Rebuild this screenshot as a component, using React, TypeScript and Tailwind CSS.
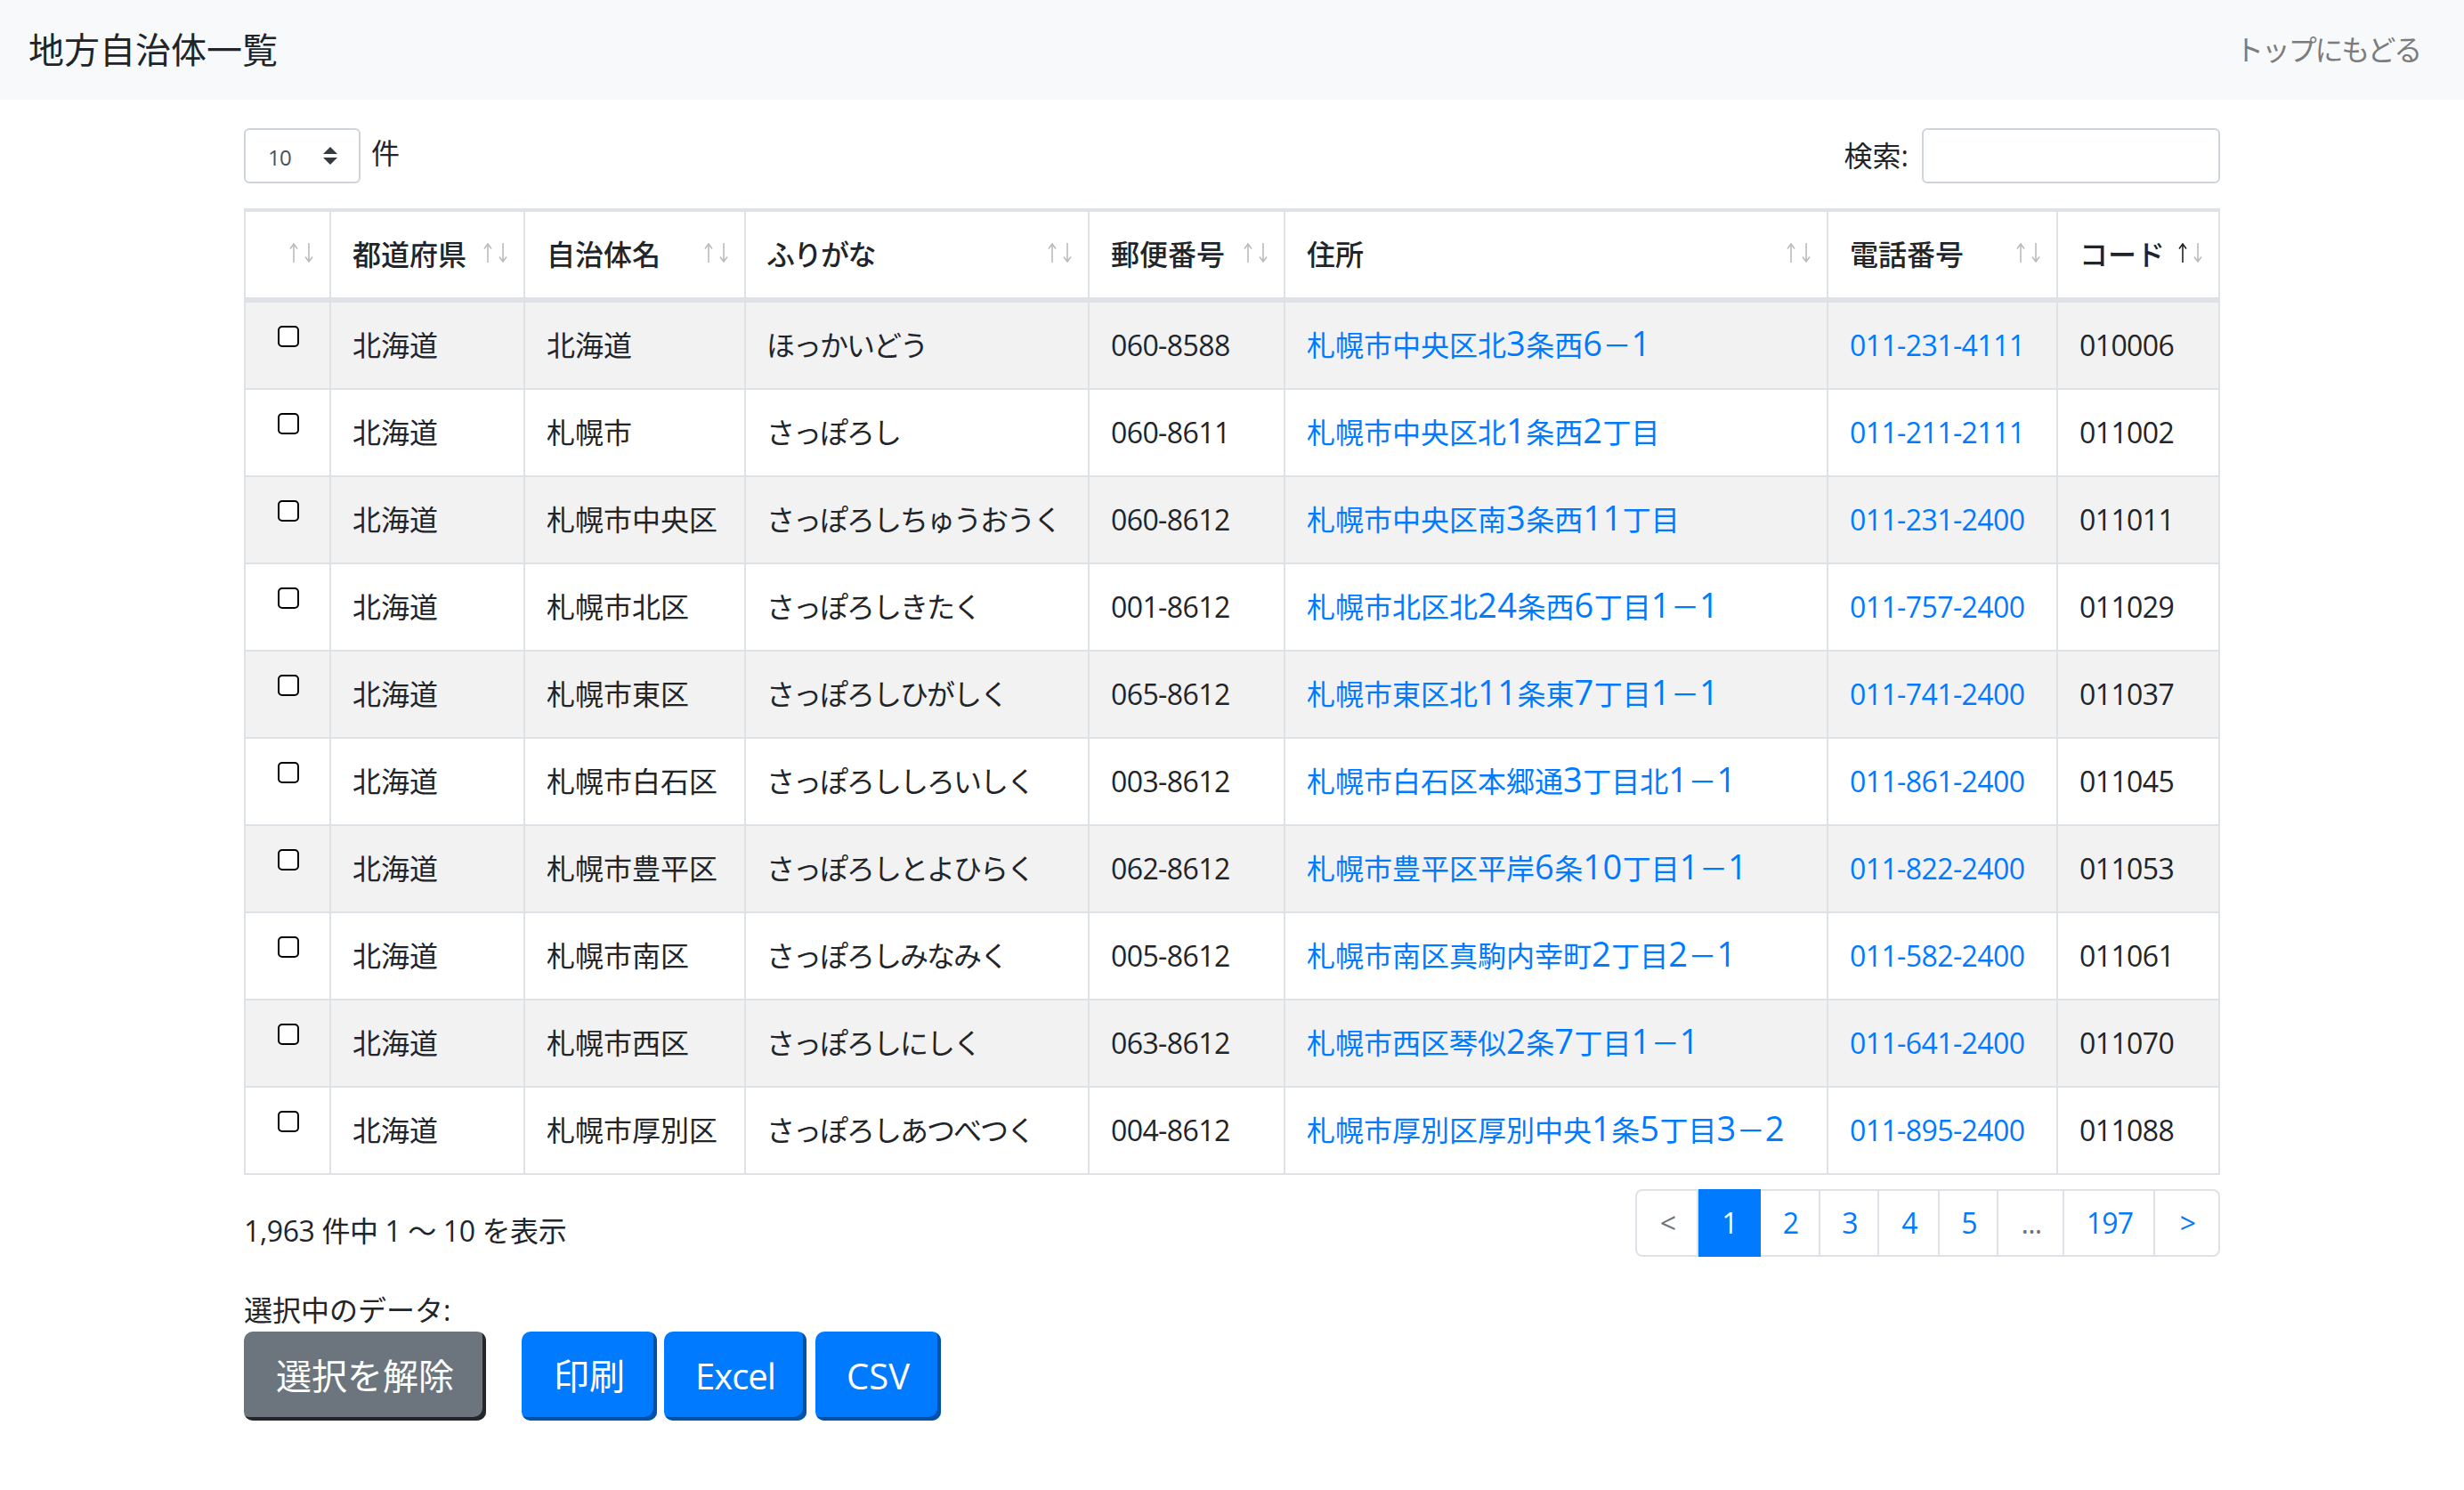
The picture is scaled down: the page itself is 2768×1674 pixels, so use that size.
import { ChangeEvent, useState } from "react"

type Row = {
  city: string
  kana: string
  zip: string
  address: string
  tel: string
  code: string
}

const rows: Row[] = [
  { city: "北海道", kana: "ほっかいどう", zip: "060-8588", address: "札幌市中央区北3条西6－1", tel: "011-231-4111", code: "010006" },
  { city: "札幌市", kana: "さっぽろし", zip: "060-8611", address: "札幌市中央区北1条西2丁目", tel: "011-211-2111", code: "011002" },
  { city: "札幌市中央区", kana: "さっぽろしちゅうおうく", zip: "060-8612", address: "札幌市中央区南3条西11丁目", tel: "011-231-2400", code: "011011" },
  { city: "札幌市北区", kana: "さっぽろしきたく", zip: "001-8612", address: "札幌市北区北24条西6丁目1－1", tel: "011-757-2400", code: "011029" },
  { city: "札幌市東区", kana: "さっぽろしひがしく", zip: "065-8612", address: "札幌市東区北11条東7丁目1－1", tel: "011-741-2400", code: "011037" },
  { city: "札幌市白石区", kana: "さっぽろししろいしく", zip: "003-8612", address: "札幌市白石区本郷通3丁目北1－1", tel: "011-861-2400", code: "011045" },
  { city: "札幌市豊平区", kana: "さっぽろしとよひらく", zip: "062-8612", address: "札幌市豊平区平岸6条10丁目1－1", tel: "011-822-2400", code: "011053" },
  { city: "札幌市南区", kana: "さっぽろしみなみく", zip: "005-8612", address: "札幌市南区真駒内幸町2丁目2－1", tel: "011-582-2400", code: "011061" },
  { city: "札幌市西区", kana: "さっぽろしにしく", zip: "063-8612", address: "札幌市西区琴似2条7丁目1－1", tel: "011-641-2400", code: "011070" },
  { city: "札幌市厚別区", kana: "さっぽろしあつべつく", zip: "004-8612", address: "札幌市厚別区厚別中央1条5丁目3－2", tel: "011-895-2400", code: "011088" },
]

const headers = ["", "都道府県", "自治体名", "ふりがな", "郵便番号", "住所", "電話番号", "コード"]

const colWidths = ["w-[96px]", "w-[218px]", "w-[248px]", "w-[386px]", "w-[220px]", "w-[610px]", "w-[258px]", "w-[180px]"]

const pages = [
  { label: "<", className: "w-[71px] text-[#6c757d] rounded-l-lg border-l-2" },
  { label: "1", className: "w-[70px] bg-[#007bff] text-white border-y-[#007bff] border-r-[#007bff]" },
  { label: "2", className: "w-[67px] text-[#007bff]" },
  { label: "3", className: "w-[66px] text-[#007bff]" },
  { label: "4", className: "w-[68px] text-[#007bff]" },
  { label: "5", className: "w-[66px] text-[#007bff]" },
  { label: "...", className: "w-[74px] text-[#6c757d]" },
  { label: "197", className: "w-[102px] text-[#007bff]" },
  { label: ">", className: "w-[73px] text-[#007bff] rounded-r-lg" },
]

function SortArrows({ active }: { active?: boolean }) {
  return (
    <span className="flex gap-[7px] -mt-[5px] shrink-0">
      <svg width="10" height="22" viewBox="0 0 10 22" fill="none" stroke="currentColor" strokeWidth="1.6" className={active ? "text-[#212529]" : "text-[#212529] opacity-30"}>
        <path d="M5 22V1M1 6.5 5 1l4 5.5" />
      </svg>
      <svg width="10" height="22" viewBox="0 0 10 22" fill="none" stroke="currentColor" strokeWidth="1.6" className="text-[#212529] opacity-30">
        <path d="M5 0v21M1 15.5 5 21l4-5.5" />
      </svg>
    </span>
  )
}

// 住所の数字だけ少し大きい字で出す
function Address({ text }: { text: string }) {
  return (
    <a href="#" className="text-[#007bff]">
      {text.split(/(\d+)/).map((part, i) =>
        /\d/.test(part) ? (
          <span key={i} className="text-[38px] leading-[0] tracking-[0.5px]">
            {part}
          </span>
        ) : (
          part
        )
      )}
    </a>
  )
}

function Cell({ children, last, className }: { children: React.ReactNode; last?: boolean; className?: string }) {
  return (
    <td className={`border-t-2 border-[#dee2e6] p-6 align-top ${last ? "" : "border-r-2"} ${className ?? ""}`}>
      {children}
    </td>
  )
}

export default function App() {
  const [search, setSearch] = useState("")

  return (
    <div className="min-h-screen bg-white font-['Open_Sans','Noto_Sans_CJK_JP',sans-serif] text-[32px] leading-[48px] text-[#212529]">
      <nav className="flex h-[112px] items-center justify-between bg-[#f8f9fa] pl-8 pr-[49px]">
        <span className="text-[40px] leading-[60px]">地方自治体一覧</span>
        <a href="#" className="tracking-[-2.2px] text-[#7c7c7d]">トップにもどる</a>
      </nav>

      <div className="mx-auto w-[2220px]">
        <div className="mt-8 flex items-start justify-between">
          <div className="flex items-start gap-3">
            <div className="flex h-[62px] w-[131px] items-center justify-between rounded-md border-2 border-[#ced4da] pl-[25px] pr-6 text-[24px] text-[#495057]">
              <span className="pt-1 tracking-[-0.8px]">10</span>
              <svg width="16" height="20" viewBox="0 0 16 20" fill="#343a40">
                <path d="M8 0l8 8H0zM8 20L0 12h16z" />
              </svg>
            </div>
            <span className="mt-1">件</span>
          </div>
          <label className="flex items-center gap-[15px]">
            <span>検索:</span>
            <input
              type="text"
              value={search}
              onChange={(e: ChangeEvent<HTMLInputElement>) => setSearch(e.target.value)}
              className="h-[62px] w-[335px] rounded-md border-2 border-[#ced4da] px-4 text-[28px] outline-none"
            />
          </label>
        </div>

        <table className="mt-7 w-[2220px] table-fixed border-separate border-spacing-0 border-2 border-[#dee2e6]">
          <colgroup>
            {colWidths.map((w) => (
              <col key={w} className={w} />
            ))}
          </colgroup>
          <thead>
            <tr>
              {headers.map((h, i) => (
                <th
                  key={i}
                  className={`border-t-2 border-b-4 border-[#dee2e6] py-6 pl-6 pr-[18px] text-left font-medium ${i < headers.length - 1 ? "border-r-2" : ""}`}
                >
                  <div className="flex items-center justify-between">
                    <span className={h === "ふりがな" ? "-ml-px tracking-[-1.5px]" : ""}>{h}</span>
                    <SortArrows active={i === headers.length - 1} />
                  </div>
                </th>
              ))}
            </tr>
          </thead>
          <tbody>
            {rows.map((row, i) => (
              <tr key={row.code} className={i % 2 === 0 ? "bg-[#f2f2f2]" : ""}>
                <Cell className="!px-0">
                  <input type="checkbox" className="ml-9 mt-[2px] block h-6 w-6 appearance-none rounded-[5px] border-2 border-black bg-white" />
                </Cell>
                <Cell>北海道</Cell>
                <Cell>{row.city}</Cell>
                <Cell className="!pl-[23px] tracking-[-2px]">{row.kana}</Cell>
                <Cell className="tracking-[-0.6px]">{row.zip}</Cell>
                <Cell className="whitespace-nowrap"><Address text={row.address} /></Cell>
                <Cell className="tracking-[-0.6px]"><a href="#" className="text-[#007bff]">{row.tel}</a></Cell>
                <Cell last className="tracking-[-0.6px]">{row.code}</Cell>
              </tr>
            ))}
          </tbody>
        </table>

        <div className="mt-4 flex items-start justify-between">
          <div className="mt-[23px] tracking-[-0.4px]">1,963 件中 1 ～ 10 を表示</div>
          <ul className="flex">
            {pages.map((p) => (
              <li
                key={p.label}
                className={`flex h-[76px] items-center justify-center border-y-2 border-r-2 border-[#dee2e6] pl-[2px] tracking-[-0.75px] ${p.className}`}
              >
                {p.label}
              </li>
            ))}
          </ul>
        </div>

        <div className="mt-9">選択中のデータ:</div>
        <div className="flex text-[40px] leading-[60px] text-white">
          <button className="mr-10 h-[100px] w-[272px] rounded-[10px] bg-[#6c757d] shadow-[inset_-4px_-4px_0_#23272b]">選択を解除</button>
          <button className="mr-2 h-[100px] w-[152px] rounded-[10px] bg-[#007bff] shadow-[inset_-4px_-4px_0_#0052a8]">印刷</button>
          <button className="mr-[10px] h-[100px] w-[160px] rounded-[10px] bg-[#007bff] tracking-[-1px] shadow-[inset_-4px_-4px_0_#0052a8]">Excel</button>
          <button className="h-[100px] w-[141px] rounded-[10px] bg-[#007bff] shadow-[inset_-4px_-4px_0_#0052a8]">CSV</button>
        </div>
      </div>
    </div>
  )
}
